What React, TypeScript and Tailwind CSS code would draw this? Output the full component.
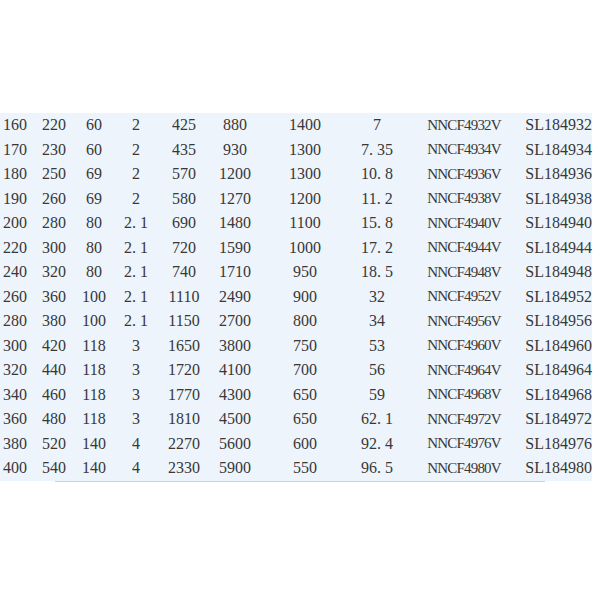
const rows: string[][] = [
  ["160", "220", "60", "2", "425", "880", "1400", "7", "NNCF4932V", "SL184932"],
  ["170", "230", "60", "2", "435", "930", "1300", "7. 35", "NNCF4934V", "SL184934"],
  ["180", "250", "69", "2", "570", "1200", "1300", "10. 8", "NNCF4936V", "SL184936"],
  ["190", "260", "69", "2", "580", "1270", "1200", "11. 2", "NNCF4938V", "SL184938"],
  ["200", "280", "80", "2. 1", "690", "1480", "1100", "15. 8", "NNCF4940V", "SL184940"],
  ["220", "300", "80", "2. 1", "720", "1590", "1000", "17. 2", "NNCF4944V", "SL184944"],
  ["240", "320", "80", "2. 1", "740", "1710", "950", "18. 5", "NNCF4948V", "SL184948"],
  ["260", "360", "100", "2. 1", "1110", "2490", "900", "32", "NNCF4952V", "SL184952"],
  ["280", "380", "100", "2. 1", "1150", "2700", "800", "34", "NNCF4956V", "SL184956"],
  ["300", "420", "118", "3", "1650", "3800", "750", "53", "NNCF4960V", "SL184960"],
  ["320", "440", "118", "3", "1720", "4100", "700", "56", "NNCF4964V", "SL184964"],
  ["340", "460", "118", "3", "1770", "4300", "650", "59", "NNCF4968V", "SL184968"],
  ["360", "480", "118", "3", "1810", "4500", "650", "62. 1", "NNCF4972V", "SL184972"],
  ["380", "520", "140", "4", "2270", "5600", "600", "92. 4", "NNCF4976V", "SL184976"],
  ["400", "540", "140", "4", "2330", "5900", "550", "96. 5", "NNCF4980V", "SL184980"],
];

export default function App() {
  return (
    <div className="w-[600px] h-[600px] bg-white pt-[113px] text-[#383838] [font-family:'Liberation_Serif',serif]">
      {/* bearing table */}
      <div className="w-[592px] bg-[#eef4fb]">
        {rows.map((r) => (
          <div
            key={r[0]}
            className="grid h-[24.5px] items-center text-[16px] leading-none grid-cols-[30px_48px_32px_52px_44px_58px_82px_62px_112px_72px]"
          >
            <span className="text-center">{r[0]}</span>
            <span className="text-center">{r[1]}</span>
            <span className="text-center">{r[2]}</span>
            <span className="text-center">{r[3]}</span>
            <span className="text-center">{r[4]}</span>
            <span className="text-center">{r[5]}</span>
            <span className="text-center">{r[6]}</span>
            <span className="text-center">{r[7]}</span>
            <span className="text-center text-[15px] tracking-[-0.8px]">{r[8]}</span>
            <span className="text-right">{r[9]}</span>
          </div>
        ))}
      </div>
      <div className="ml-[55px] w-[490px] h-px bg-[#cdd4dc]" />
    </div>
  );
}
